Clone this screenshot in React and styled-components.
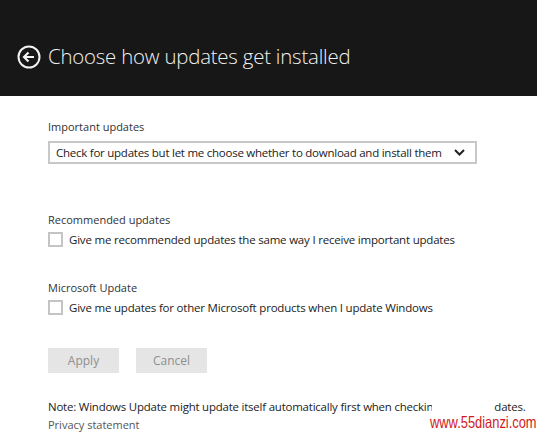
import React from "react";
import styled, { createGlobalStyle } from "styled-components";

const GlobalStyle = createGlobalStyle`
  html, body {
    margin: 0;
    padding: 0;
    background: #fff;
    font-family: "Open Sans", "Noto Sans", sans-serif;
  }
`;

const Page = styled.div`
  width: 537px;
  height: 437px;
  position: relative;
  overflow: hidden;
  background: #fff;
`;

const Header = styled.header`
  height: 96px;
  background: #171717;
  display: flex;
  align-items: center;
  padding: 17px 0 0 17px;
  gap: 7px;
  box-sizing: border-box;
`;

const Title = styled.h1`
  margin: 0;
  font-family: "Open Sans", sans-serif;
  font-weight: 300;
  font-size: 20.4px;
  color: #f2f2f2;
  letter-spacing: -0.2px;
  padding-bottom: 2px;
`;

const Body = styled.main`
  padding: 24px 0 0 48px;
  display: flex;
  flex-direction: column;
`;

const Label = styled.div`
  font-size: 11px;
  color: #333;
  line-height: 14px;
  margin-bottom: ${(p) => p.gap || 7}px;
`;

const Select = styled.div`
  width: 429px;
  height: 23px;
  box-sizing: border-box;
  border: 2px solid #c8c8c8;
  display: flex;
  align-items: center;
  justify-content: space-between;
  padding: 0 10px 0 6px;
  font-size: 11.5px;
  color: #222;
  letter-spacing: -0.25px;
`;

const Section = styled.section`
  margin-top: ${(p) => p.top}px;
`;

const CheckRow = styled.label`
  display: flex;
  align-items: center;
  gap: 6px;
  font-size: 11.5px;
  color: #222;
  letter-spacing: -0.2px;
`;

const Box = styled.span`
  width: 15px;
  height: 15px;
  box-sizing: border-box;
  border: 2px solid #c4c4c4;
  background: #fff;
`;

const Buttons = styled.div`
  display: flex;
  gap: 17px;
  margin-top: 33px;
`;

const Button = styled.button`
  width: 71px;
  height: 25px;
  border: none;
  background: #e5e5e5;
  color: #8f8f8f;
  font-family: "Open Sans", sans-serif;
  font-size: 12px;
  padding: 0;
`;

const Note = styled.p`
  margin: 24px 0 0;
  font-size: 11.45px;
  color: #222;
  letter-spacing: -0.2px;
  line-height: 19px;
  white-space: nowrap;
`;

/* part of the note that sits under the watermark's white patch */
const Covered = styled.span`
  display: inline-block;
  width: 61px;
`;

const Privacy = styled.div`
  font-size: 11px;
  color: #555;
  line-height: 18px;
`;

const Watermark = styled.div`
  position: absolute;
  left: 430px;
  top: 397px;
  width: 107px;
  display: flex;
  flex-direction: column;
`;

const Blank = styled.div`
  width: 60px;
  height: 15px;
  background: #fff;
  margin-left: 2px;
`;

const Mark = styled.div`
  font-family: "Liberation Sans", Arial, sans-serif;
  font-size: 16.5px;
  line-height: 20px;
  color: #d0191c;
  background: #fff;
  white-space: nowrap;
  transform: scaleX(0.78);
  transform-origin: left center;
`;

const BackIcon = () => (
  <svg width="24" height="24" viewBox="0 0 24 24">
    <circle cx="12" cy="12" r="10.5" fill="none" stroke="#f2f2f2" strokeWidth="2" />
    <path d="M17 12H7.5M11.5 7.5L7 12l4.5 4.5" fill="none" stroke="#f2f2f2" strokeWidth="2.2" />
  </svg>
);

const Chevron = () => (
  <svg width="11" height="7" viewBox="0 0 11 7">
    <path d="M1 1l4.5 4.5L10 1" fill="none" stroke="#222" strokeWidth="2" />
  </svg>
);

export default function App() {
  return (
    <Page>
      <GlobalStyle />
      <Header>
        <BackIcon />
        <Title>Choose how updates get installed</Title>
      </Header>
      <Body>
        <Label>Important updates</Label>
        <Select>
          Check for updates but let me choose whether to download and install them
          <Chevron />
        </Select>

        <Section top={49}>
          <Label gap={5}>Recommended updates</Label>
          <CheckRow>
            <Box />
            Give me recommended updates the same way I receive important updates
          </CheckRow>
        </Section>

        <Section top={34}>
          <Label gap={5}>Microsoft Update</Label>
          <CheckRow>
            <Box />
            Give me updates for other Microsoft products when I update Windows
          </CheckRow>
        </Section>

        <Buttons>
          <Button>Apply</Button>
          <Button>Cancel</Button>
        </Buttons>

        <Note>
          Note: Windows Update might update itself automatically first when checkin
          <Covered>g for up</Covered>dates.
        </Note>
        <Privacy>Privacy statement</Privacy>
      </Body>
      <Watermark>
        <Blank />
        <Mark>www.55dianzi.com</Mark>
      </Watermark>
    </Page>
  );
}
